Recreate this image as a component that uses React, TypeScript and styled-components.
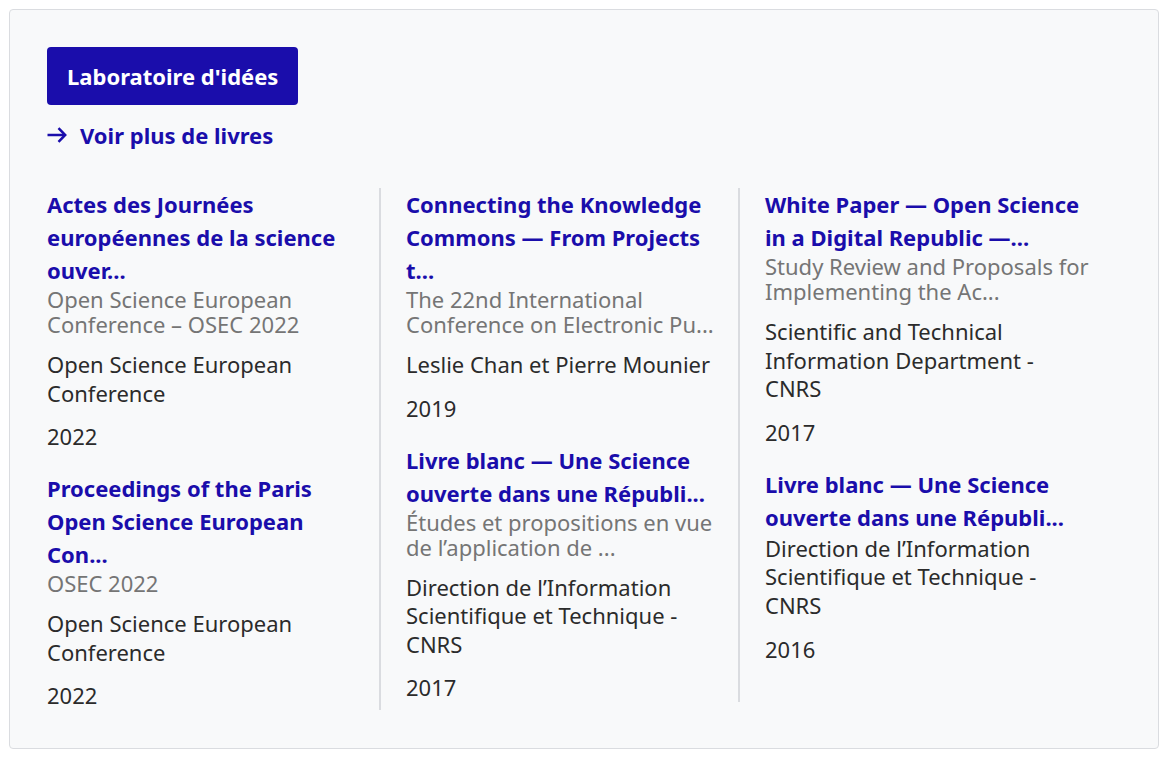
import React from "react";
import styled, { createGlobalStyle } from "styled-components";

const Global = createGlobalStyle`
  html, body { margin: 0; padding: 0; background: #ffffff; }
  body { font-family: "Noto Sans", "Open Sans", sans-serif; }
`;

const Card = styled.section`
  box-sizing: border-box;
  margin: 9px 0 0 9px;
  width: 1150px;
  padding: 37px 37px 38px 37px;
  border: 1px solid #dadce0;
  border-radius: 4px;
  background: #f8f9fa;
`;

const Button = styled.a`
  box-sizing: border-box;
  display: inline-flex;
  align-items: center;
  justify-content: center;
  height: 58px;
  padding: 0 20px;
  border-radius: 4px;
  background: #1a0dab;
  color: #ffffff;
  font-size: 22px;
  font-weight: 700;
  text-decoration: none;
  white-space: nowrap;
`;

const MoreLink = styled.a`
  display: flex;
  align-items: center;
  gap: 13px;
  margin-top: 16px;
  height: 28px;
  color: #1a0dab;
  font-size: 22px;
  font-weight: 700;
  line-height: 28px;
  text-decoration: none;
`;

const Columns = styled.div`
  display: flex;
  align-items: flex-start;
  gap: 25px;
  margin-top: 39px;
`;

const Column = styled.div<{ $last?: boolean }>`
  box-sizing: border-box;
  width: 334px;
  padding-right: ${(p) => (p.$last ? "9px" : "16px")};
  border-right: ${(p) => (p.$last ? "none" : "2px solid #dadce0")};
  display: flex;
  flex-direction: column;
  gap: 21px;
`;

const Item = styled.article`
  display: flex;
  flex-direction: column;
`;

const Title = styled.a`
  color: #1a0dab;
  font-size: 22px;
  font-weight: 700;
  line-height: 33px;
  text-decoration: none;
`;

const Subtitle = styled.div`
  color: #757575;
  font-size: 22px;
  line-height: 25px;
  margin-bottom: 13px;
`;

const Author = styled.div`
  color: #2b2b2b;
  font-size: 22px;
  line-height: 28.6px;
  margin-bottom: 15px;
`;

const Year = styled.div`
  color: #2b2b2b;
  font-size: 22px;
  line-height: 29px;
`;

type Book = { title: string; subtitle?: string; author: string; year: string };

const columns: Book[][] = [
  [
    {
      title: "Actes des Journées européennes de la science ouver...",
      subtitle: "Open Science European Conference – OSEC 2022",
      author: "Open Science European Conference",
      year: "2022",
    },
    {
      title: "Proceedings of the Paris Open Science European Con...",
      subtitle: "OSEC 2022",
      author: "Open Science European Conference",
      year: "2022",
    },
  ],
  [
    {
      title: "Connecting the Knowledge Commons — From Projects t...",
      subtitle: "The 22nd International Conference on Electronic Pu...",
      author: "Leslie Chan et Pierre Mounier",
      year: "2019",
    },
    {
      title: "Livre blanc — Une Science ouverte dans une Républi...",
      subtitle: "Études et propositions en vue de l’application de ...",
      author: "Direction de l’Information Scientifique et Technique - CNRS",
      year: "2017",
    },
  ],
  [
    {
      title: "White Paper — Open Science in a Digital Republic —...",
      subtitle: "Study Review and Proposals for Implementing the Ac...",
      author: "Scientific and Technical Information Department - CNRS",
      year: "2017",
    },
    {
      title: "Livre blanc — Une Science ouverte dans une Républi...",
      author: "Direction de l’Information Scientifique et Technique - CNRS",
      year: "2016",
    },
  ],
];

const Arrow = () => (
  <svg width="20" height="16" viewBox="0 0 20 16" fill="none" aria-hidden="true">
    <path d="M0.5 8H18" stroke="#1a0dab" strokeWidth="2.5" />
    <path d="M11.5 1.2L18.2 8L11.5 14.8" stroke="#1a0dab" strokeWidth="2.5" strokeLinejoin="miter" />
  </svg>
);

export default function App() {
  return (
    <>
      <Global />
      <Card>
        <Button href="#">Laboratoire d'idées</Button>
        <MoreLink href="#">
          <Arrow />
          Voir plus de livres
        </MoreLink>
        <Columns>
          {columns.map((col, ci) => (
            <Column key={ci} $last={ci === columns.length - 1}>
              {col.map((b, bi) => (
                <Item key={bi}>
                  <Title href="#">{b.title}</Title>
                  {b.subtitle && <Subtitle>{b.subtitle}</Subtitle>}
                  <Author>{b.author}</Author>
                  <Year>{b.year}</Year>
                </Item>
              ))}
            </Column>
          ))}
        </Columns>
      </Card>
    </>
  );
}
